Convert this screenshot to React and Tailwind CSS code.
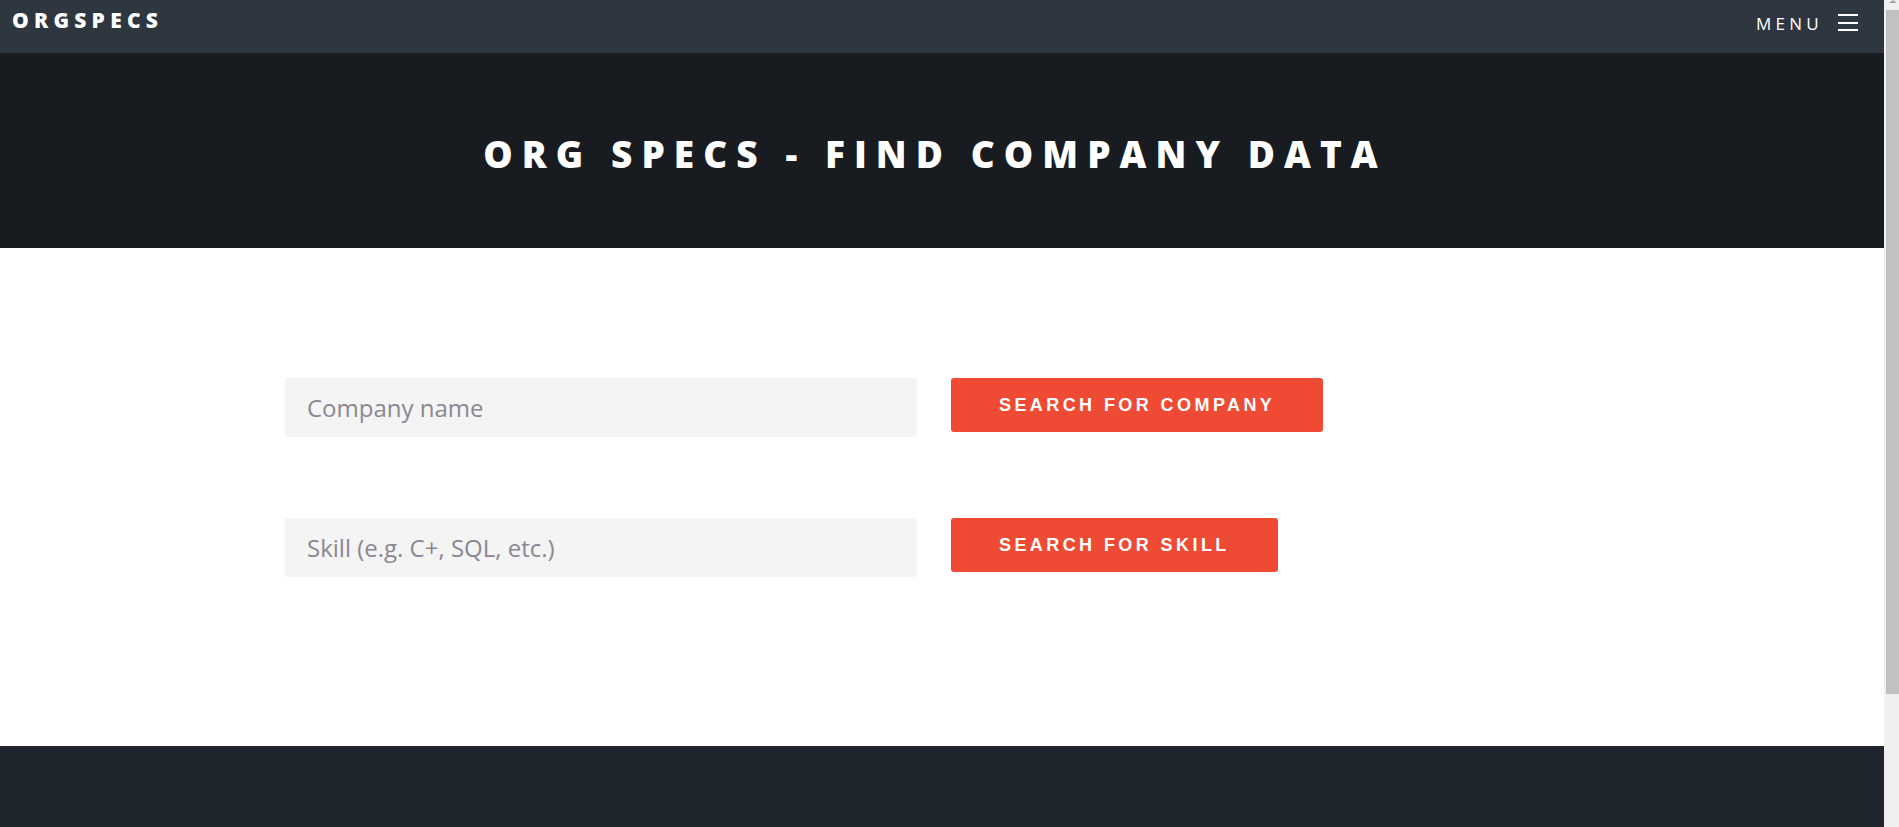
import React from "react";

const OPEN = { fontFamily: '"Open Sans", "Noto Sans", sans-serif' };
const ARIAL = { fontFamily: '"Liberation Sans", Arial, sans-serif' };

function Row({ placeholder, label }) {
  return (
    <div className="flex items-start gap-[34px]">
      <div
        className="w-[632px] h-[59px] bg-[#f4f4f4] rounded-[3px] flex items-center pl-[22px] text-[24px] text-[#8b8792]"
        style={OPEN}
      >
        {placeholder}
      </div>
      <button
        className="h-[54px] px-12 bg-[#ee4a34] rounded-[3px] text-white font-bold text-[18px] tracking-[0.19em] whitespace-nowrap flex items-center"
        style={ARIAL}
      >
        {label}
      </button>
    </div>
  );
}

export default function App() {
  return (
    <div className="flex h-[827px] w-full overflow-hidden bg-white">
      <div className="flex-1 flex flex-col min-w-0">
        <header className="h-[53px] bg-[#2e3640] flex items-start justify-between pl-[12px] pr-[26px] shrink-0">
          <div
            className="pt-[10px] text-[21px] leading-[21px] font-extrabold text-white tracking-[0.25em]"
            style={OPEN}
          >
            ORGSPECS
          </div>
          <div className="flex items-start pt-[12px]">
            <span
              className="text-[17px] leading-[17px] text-white tracking-[0.25em] pt-[3px]"
              style={OPEN}
            >
              MENU
            </span>
            <div className="ml-[15px] mt-[2px] w-[20px] flex flex-col gap-[5.5px]">
              <span className="block h-[2px] bg-white" />
              <span className="block h-[2px] bg-white" />
              <span className="block h-[2px] bg-white" />
            </div>
          </div>
        </header>
        <section className="h-[195px] bg-[#181c20] flex items-center justify-center shrink-0 pt-[6px] pr-[14px]">
          <h1
            className="text-[37px] font-extrabold text-white tracking-[0.245em] leading-none"
            style={OPEN}
          >
            ORG SPECS - FIND COMPANY DATA
          </h1>
        </section>
        <main className="h-[498px] bg-white pl-[285px] pt-[130px] flex flex-col gap-[81px] shrink-0">
          <Row placeholder="Company name" label="SEARCH FOR COMPANY" />
          <Row placeholder="Skill (e.g. C+, SQL, etc.)" label="SEARCH FOR SKILL" />
        </main>
        <footer className="flex-1 bg-[#1f252d]" />
      </div>
      <div className="w-[15px] shrink-0 bg-[#f0f0f0] flex flex-col">
        <div className="h-[10px] flex justify-center pl-[2px]">
          <svg width="8" height="3" viewBox="0 0 8 3">
            <polygon points="0,3 8,3 4,0" fill="#a3a3a3" />
          </svg>
        </div>
        <div className="ml-[2px] w-[13px] h-[684px] bg-[#c1c1c1]" />
      </div>
    </div>
  );
}
